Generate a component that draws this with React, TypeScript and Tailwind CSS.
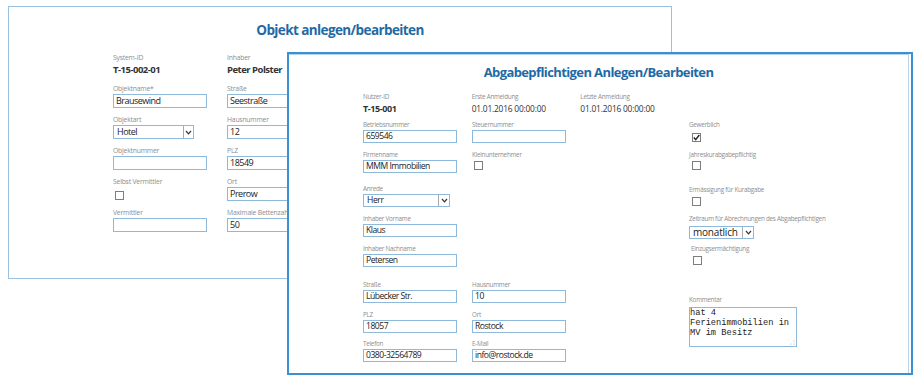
import React from "react";

type Cell = { label: string; value?: string; kind?: "input" | "bold" | "text" | "check" | "select" };

function Chevron() {
  return (
    <svg width="7" height="5" viewBox="0 0 7 5">
      <polyline points="1,1 3.5,3.8 6,1" fill="none" stroke="#333" strokeWidth="1.2" />
    </svg>
  );
}

function Check({ checked = false, className = "" }: { checked?: boolean; className?: string }) {
  return (
    <div className={`w-[9px] h-[9px] border border-[#7d7d7d] bg-white flex items-center justify-center ${className}`}>
      {checked && (
        <svg width="7" height="7" viewBox="0 0 7 7">
          <polyline points="0.8,3.6 2.7,5.6 6.3,1" fill="none" stroke="#222" strokeWidth="1.4" />
        </svg>
      )}
    </div>
  );
}

// back window fields
function BackField({ c }: { c: Cell }) {
  return (
    <div className="w-[114px]">
      <div className="h-[11px] text-[6.8px] leading-[11px] tracking-[-0.2px] text-[#8e8e8e] whitespace-nowrap">{c.label}</div>
      {c.kind === "bold" && (
        <div className="h-[14px] text-[9.5px] leading-[14px] tracking-[-0.5px] font-bold text-[#333] whitespace-nowrap">{c.value}</div>
      )}
      {c.kind === "input" && (
        <div className="h-[14px] w-[94px] border border-[#8fb9da] bg-white px-[2px] text-[9px] leading-[12px] tracking-[-0.5px] text-[#222] whitespace-nowrap">
          {c.value}
        </div>
      )}
      {c.kind === "select" && (
        <div className="h-[14px] w-[81px] border border-[#8fb9da] bg-white flex text-[9px] leading-[12px] tracking-[-0.5px] text-[#222]">
          <div className="flex-1 px-[3px]">{c.value}</div>
          <div className="w-[10px] border-l border-[#a9a9a9] flex items-center justify-center"><Chevron /></div>
        </div>
      )}
      {c.kind === "check" && (
        <div className="h-[14px] pt-[4px] pl-[2px]"><Check /></div>
      )}
    </div>
  );
}

function BackWindow() {
  const rows: Cell[][] = [
    [{ label: "System-ID", value: "T-15-002-01", kind: "bold" }, { label: "Inhaber", value: "Peter Polster", kind: "bold" }],
    [{ label: "Objektname*", value: "Brausewind", kind: "input" }, { label: "Straße", value: "Seestraße", kind: "input" }],
    [{ label: "Objektart", value: "Hotel", kind: "select" }, { label: "Hausnummer", value: "12", kind: "input" }],
    [{ label: "Objektnummer", value: "", kind: "input" }, { label: "PLZ", value: "18549", kind: "input" }],
    [{ label: "Selbst Vermittler", kind: "check" }, { label: "Ort", value: "Prerow", kind: "input" }],
    [{ label: "Vermittler", value: "", kind: "input" }, { label: "Maximale Bettenzahl", value: "50", kind: "input" }],
  ];
  return (
    <div className="absolute left-[8px] top-[6px] w-[664px] h-[273px] border border-[#9cc2df] bg-white">
      <h1 className="mt-[13px] text-center text-[13.5px] leading-[20px] tracking-[-0.6px] font-bold text-[#1f6aa5]">Objekt anlegen/bearbeiten</h1>
      <div className="ml-[104px] mt-[12px] flex flex-col gap-[6px]">
        {rows.map((r, i) => (
          <div key={i} className="flex">
            {r.map((c) => <BackField key={c.label} c={c} />)}
          </div>
        ))}
      </div>
    </div>
  );
}

// front window
const lbl = "h-[10px] text-[6.3px] leading-[10px] tracking-[-0.25px] text-[#8e8e8e] whitespace-nowrap";
const inp = "h-[13px] border border-[#8fb9da] bg-white px-[2px] text-[8.6px] leading-[11px] tracking-[-0.5px] text-[#222] whitespace-nowrap";

function FrontField({ c }: { c: Cell }) {
  return (
    <div className="w-[109px]">
      <div className={lbl}>{c.label}</div>
      {c.kind === "bold" && <div className="h-[13px] text-[9px] leading-[13px] tracking-[-0.4px] font-bold text-[#333]">{c.value}</div>}
      {c.kind === "text" && <div className="h-[13px] text-[8.4px] leading-[13px] tracking-[-0.2px] text-[#333] whitespace-nowrap">{c.value}</div>}
      {c.kind === "input" && <div className={`${inp} w-[94px]`}>{c.value}</div>}
      {c.kind === "select" && (
        <div className="h-[13px] w-[87px] border border-[#8fb9da] bg-white flex text-[8.6px] leading-[11px] tracking-[-0.4px] text-[#222]">
          <div className="flex-1 px-[3px]">{c.value}</div>
          <div className="w-[11px] border-l border-[#a9a9a9] flex items-center justify-center"><Chevron /></div>
        </div>
      )}
      {c.kind === "check" && <div className="h-[13px] pt-[1px] pl-[2px]"><Check /></div>}
    </div>
  );
}

function FrontWindow() {
  const rows: { mt: string; cells: Cell[] }[] = [
    { mt: "mt-0", cells: [{ label: "Nutzer-ID", value: "T-15-001", kind: "bold" }, { label: "Erste Anmeldung", value: "01.01.2016 00:00:00", kind: "text" }, { label: "Letzte Anmeldung", value: "01.01.2016 00:00:00", kind: "text" }] },
    { mt: "mt-[5px]", cells: [{ label: "Betriebsnummer", value: "659546", kind: "input" }, { label: "Steuernummer", value: "", kind: "input" }] },
    { mt: "mt-[7px]", cells: [{ label: "Firmenname", value: "MMM Immobilien", kind: "input" }, { label: "Kleinunternehmer", kind: "check" }] },
    { mt: "mt-[11px]", cells: [{ label: "Anrede", value: "Herr", kind: "select" }] },
    { mt: "mt-[7px]", cells: [{ label: "Inhaber Vorname", value: "Klaus", kind: "input" }] },
    { mt: "mt-[7px]", cells: [{ label: "Inhaber Nachname", value: "Petersen", kind: "input" }] },
    { mt: "mt-[13px]", cells: [{ label: "Straße", value: "Lübecker Str.", kind: "input" }, { label: "Hausnummer", value: "10", kind: "input" }] },
    { mt: "mt-[7px]", cells: [{ label: "PLZ", value: "18057", kind: "input" }, { label: "Ort", value: "Rostock", kind: "input" }] },
    { mt: "mt-[6px]", cells: [{ label: "Telefon", value: "0380-32564789", kind: "input" }, { label: "E-Mail", value: "info@rostock.de", kind: "input" }] },
  ];
  return (
    <div className="absolute left-[287px] top-[52px] w-[626px] h-[323px] border-2 border-[#3b90d2] bg-white">
      <div className="h-full border-t border-r border-[#b4d4ec] mr-[2px]">
        <h1 className="mt-[7px] text-center text-[13px] leading-[20px] tracking-[-0.6px] font-bold text-[#1f6aa5]">Abgabepflichtigen Anlegen/Bearbeiten</h1>
        <div className="mt-[10px] flex">
          <div className="ml-[74px] w-[326px]">
            {rows.map((r, i) => (
              <div key={i} className={`flex ${r.mt}`}>
                {r.cells.map((c) => <FrontField key={c.label} c={c} />)}
              </div>
            ))}
          </div>
          <div className="mt-[28px] flex flex-col">
            <div className={lbl}>Gewerblich</div>
            <Check checked className="mt-[3px] ml-[3px]" />
            <div className={`${lbl} mt-[8px]`}>Jahreskurabgabepflichtig</div>
            <Check className="mt-[1px] ml-[3px]" />
            <div className={`${lbl} mt-[15px]`}>Ermässigung für Kurabgabe</div>
            <Check className="mt-[2px] ml-[3px]" />
            <div className={`${lbl} mt-[8px]`}>Zeitraum für Abrechnungen des Abgabepflichtigen</div>
            <div className="mt-[2px] h-[13px] w-[65px] border border-[#8fb9da] bg-white flex text-[10px] leading-[11px] tracking-[-0.2px] text-[#222]">
              <div className="flex-1 px-[3px] whitespace-nowrap">monatlich</div>
              <div className="w-[11px] border-l border-[#a9a9a9] flex items-center justify-center"><Chevron /></div>
            </div>
            <div className={`${lbl} mt-[5px] ml-[2px]`}>Einzugsermächtigung</div>
            <Check className="mt-[2px] ml-[4px]" />
            <div className={`${lbl} mt-[30px]`}>Kommentar</div>
            <div className="relative mt-[2px] w-[108px] h-[40px] border border-[#8fb9da] bg-white font-['Liberation_Mono',monospace] text-[8.7px] leading-[10px] text-[#222]">
              <div>hat 4</div>
              <div>Ferienimmobilien in</div>
              <div>MV im Besitz</div>
              <svg className="absolute right-[1px] bottom-[1px]" width="5" height="5" viewBox="0 0 5 5">
                <circle cx="4" cy="1" r="0.5" fill="#999" />
                <circle cx="4" cy="4" r="0.5" fill="#999" />
                <circle cx="1" cy="4" r="0.5" fill="#999" />
              </svg>
            </div>
          </div>
        </div>
      </div>
    </div>
  );
}

export default function App() {
  return (
    <div className="relative w-[919px] h-[384px] bg-white font-['Open_Sans',sans-serif] overflow-hidden">
      <BackWindow />
      <FrontWindow />
    </div>
  );
}
